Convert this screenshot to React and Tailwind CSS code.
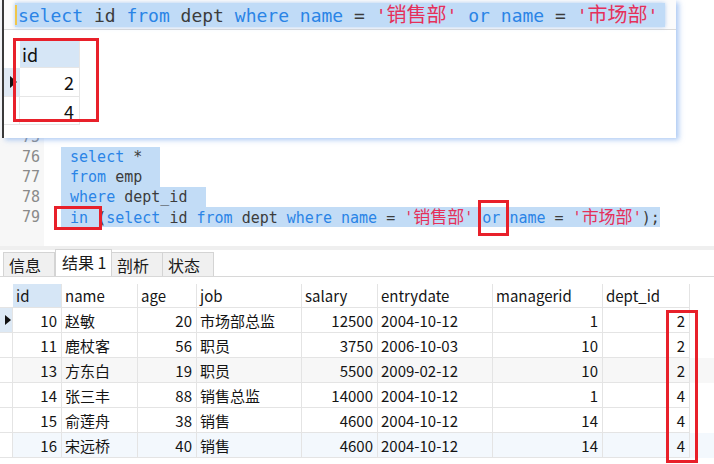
import React from "react";

const mono = "font-['DejaVu_Sans_Mono','Noto_Sans_CJK_SC',monospace]";
const ui = "font-['Noto_Sans_CJK_SC','Noto_Sans',sans-serif]";

const K = ({ children }) => <span className="text-[#2a84e6]">{children}</span>;
const T = ({ children }) => <span className="text-[#3c3c3c]">{children}</span>;
const S = ({ children, big }) => (
  <span className="text-[#e5305a]">
    '<span className={big ? "text-[20px]" : "text-[17px]"}>{children}</span>'
  </span>
);

function QueryTail({ big }) {
  return (
    <>
      <K>select</K> <T>id</T> <K>from</K> <T>dept</T> <K>where</K> <K>name</K> <T>=</T>{" "}
      <S big={big}>销售部</S> <K>or</K> <K>name</K> <T>=</T> <S big={big}>市场部</S>
    </>
  );
}

const columns = [
  { key: "id", w: "w-[49px]", right: true },
  { key: "name", w: "w-[76px]" },
  { key: "age", w: "w-[59px]", right: true },
  { key: "job", w: "w-[105px]" },
  { key: "salary", w: "w-[76px]", right: true },
  { key: "entrydate", w: "w-[115px]" },
  { key: "managerid", w: "w-[110px]", right: true },
  { key: "dept_id", w: "w-[87px]", right: true },
];

const rows = [
  { id: 10, name: "赵敏", age: 20, job: "市场部总监", salary: 12500, entrydate: "2004-10-12", managerid: 1, dept_id: 2, bg: "bg-white" },
  { id: 11, name: "鹿杖客", age: 56, job: "职员", salary: 3750, entrydate: "2006-10-03", managerid: 10, dept_id: 2, bg: "bg-white" },
  { id: 13, name: "方东白", age: 19, job: "职员", salary: 5500, entrydate: "2009-02-12", managerid: 10, dept_id: 2, bg: "bg-[#f7f7f7]" },
  { id: 14, name: "张三丰", age: 88, job: "销售总监", salary: 14000, entrydate: "2004-10-12", managerid: 1, dept_id: 4, bg: "bg-white" },
  { id: 15, name: "俞莲舟", age: 38, job: "销售", salary: 4600, entrydate: "2004-10-12", managerid: 14, dept_id: 4, bg: "bg-white" },
  { id: 16, name: "宋远桥", age: 40, job: "销售", salary: 4600, entrydate: "2004-10-12", managerid: 14, dept_id: 4, bg: "bg-[#f3f8fd]" },
];

function Triangle({ big }) {
  return big ? (
    <svg width="7" height="12" viewBox="0 0 7 12">
      <path d="M0 0 L7 6 L0 12 Z" fill="#111" />
    </svg>
  ) : (
    <svg width="6" height="10" viewBox="0 0 6 10">
      <path d="M0 0 L6 5 L0 10 Z" fill="#111" />
    </svg>
  );
}

function Editor() {
  const lines = [
    { n: 75, code: null },
    { n: 76, code: <> <K>select</K> <T>*</T>  </> },
    { n: 77, code: <> <K>from</K> <T>emp</T>  </> },
    { n: 78, code: <> <K>where</K> <T>dept_id</T>  </> },
    {
      n: 79,
      code: (
        <>
          {" "}
          <K>in</K> <T>(</T>
          <QueryTail />
          <T>);</T>
        </>
      ),
    },
  ];
  return (
    <div className="flex h-[246px] bg-white">
      <div className="w-[44px] bg-[#f7f7f7] pt-[127px]">
        {lines.map((l) => (
          <div key={l.n} className={`${mono} h-[20px] leading-[20px] text-[15px] text-[#8a8a8a] text-right pr-[4px]`}>
            {l.n}
          </div>
        ))}
      </div>
      <div className="flex-1 pt-[127px] pl-[17px]">
        {lines.map((l) => (
          <div key={l.n} className={`${mono} h-[20px] leading-[20px] text-[15px] whitespace-pre`}>
            {l.code && <span className="bg-[#c2dcf6] inline-block h-[20px]">{l.code}</span>}
          </div>
        ))}
      </div>
    </div>
  );
}

function Popup() {
  return (
    <div className="absolute left-[2px] top-0 w-[674px] h-[138px] bg-white border-l-2 border-[#3a3a3a] shadow-[3px_2px_5px_rgba(110,160,235,0.55)]">
      <div className="h-[30px] border-b border-[#d9d9d9] bg-[#fbfbfb] pt-[3px] pl-[11px]">
        <div className="flex items-center h-[24px] w-[650px] bg-[#c0dbf7] shadow-[0_0_4px_rgba(150,190,240,0.8)] overflow-hidden">
          <div className="w-[2px] h-[20px] bg-[#f0c64a] mr-px shrink-0" />
          <span className={`${mono} text-[18px] leading-[24px] whitespace-pre`}>
            <QueryTail big />
          </span>
        </div>
      </div>
      <div className={`${ui} mt-[10px] flex flex-col w-[76px] text-[18px] text-[#111]`}>
        <div className="flex h-[28px]">
          <div className="w-[16px] bg-white" />
          <div className="w-[60px] bg-[#d6e6f6] border-r border-b border-[#e6e6e6] pl-[2px] leading-[28px]">id</div>
        </div>
        <div className="flex h-[29px]">
          <div className="w-[16px] bg-[#dfe9f4] border-b border-[#e6e6e6] flex items-center pl-[6px]">
            <Triangle big />
          </div>
          <div className="w-[60px] border-r border-b border-[#e6e6e6] text-right pr-[5px] leading-[29px]">2</div>
        </div>
        <div className="flex h-[28px]">
          <div className="w-[16px] border-b border-r border-[#e6e6e6]" />
          <div className="w-[60px] border-r border-b border-[#e6e6e6] text-right pr-[5px] leading-[28px]">4</div>
        </div>
      </div>
    </div>
  );
}

function Tabs() {
  const tabs = ["信息", "结果 1", "剖析", "状态"];
  const widths = ["w-[52px]", "w-[57px]", "w-[52px]", "w-[52px]"];
  return (
    <div className="border-t-4 border-[#efefef]">
      <div className={`${ui} flex items-end h-[27px] pl-[3px] border-b border-[#d8d8d8] text-[16px] text-[#1a1a1a]`}>
        {tabs.map((t, i) =>
          i === 1 ? (
            <div key={t} className={`${widths[i]} h-[27px] bg-white border border-b-0 border-[#d4d4d4] pl-[6px] leading-[24px]`}>
              {t}
            </div>
          ) : (
            <div key={t} className={`${widths[i]} h-[24px] bg-[#f0f0f0] border border-b-0 border-[#d4d4d4] pl-[5px] leading-[24px] -ml-px first:ml-0`}>
              {t}
            </div>
          )
        )}
      </div>
    </div>
  );
}

function ResultTable() {
  return (
    <div className={`${ui} pt-[7px] text-[15px] text-[#141414]`}>
      <div className="flex h-[24px]">
        <div className="w-[13px] border-b border-[#e4e4e4]" />
        {columns.map((c, i) => (
          <div
            key={c.key}
            className={`${c.w} ${i === 0 ? "bg-[#d6e6f6]" : "bg-white"} border-r border-b border-[#e4e4e4] pl-[3px] leading-[24px]`}
          >
            {c.key}
          </div>
        ))}
      </div>
      {rows.map((r, ri) => (
        <div key={r.id} className={`flex h-[25px] ${r.bg}`}>
          <div className={`w-[13px] border-b border-r border-[#e4e4e4] flex items-center pl-[5px] ${ri === 0 ? "bg-[#dde9f5]" : "bg-white"}`}>
            {ri === 0 && <Triangle />}
          </div>
          {columns.map((c) => (
            <div
              key={c.key}
              className={`${c.w} border-r border-b border-[#e4e4e4] leading-[25px] whitespace-nowrap ${c.right ? "text-right pr-[4px]" : "pl-[3px]"}`}
            >
              {r[c.key]}
            </div>
          ))}
        </div>
      ))}
    </div>
  );
}

export default function App() {
  return (
    <div className="relative w-[714px] h-[464px] overflow-hidden bg-white">
      <Editor />
      <Tabs />
      <ResultTable />
      <Popup />
      <div className="absolute left-[13px] top-[38px] w-[86px] h-[84px] border-[3px] border-[#e8202a]" />
      <div className="absolute left-[54px] top-[206px] w-[48px] h-[24px] border-[3px] border-[#e8202a]" />
      <div className="absolute left-[478px] top-[200px] w-[31px] h-[36px] border-[3px] border-[#e8202a]" />
      <div className="absolute left-[666px] top-[310px] w-[32px] h-[153px] border-[3px] border-[#e8202a]" />
    </div>
  );
}
